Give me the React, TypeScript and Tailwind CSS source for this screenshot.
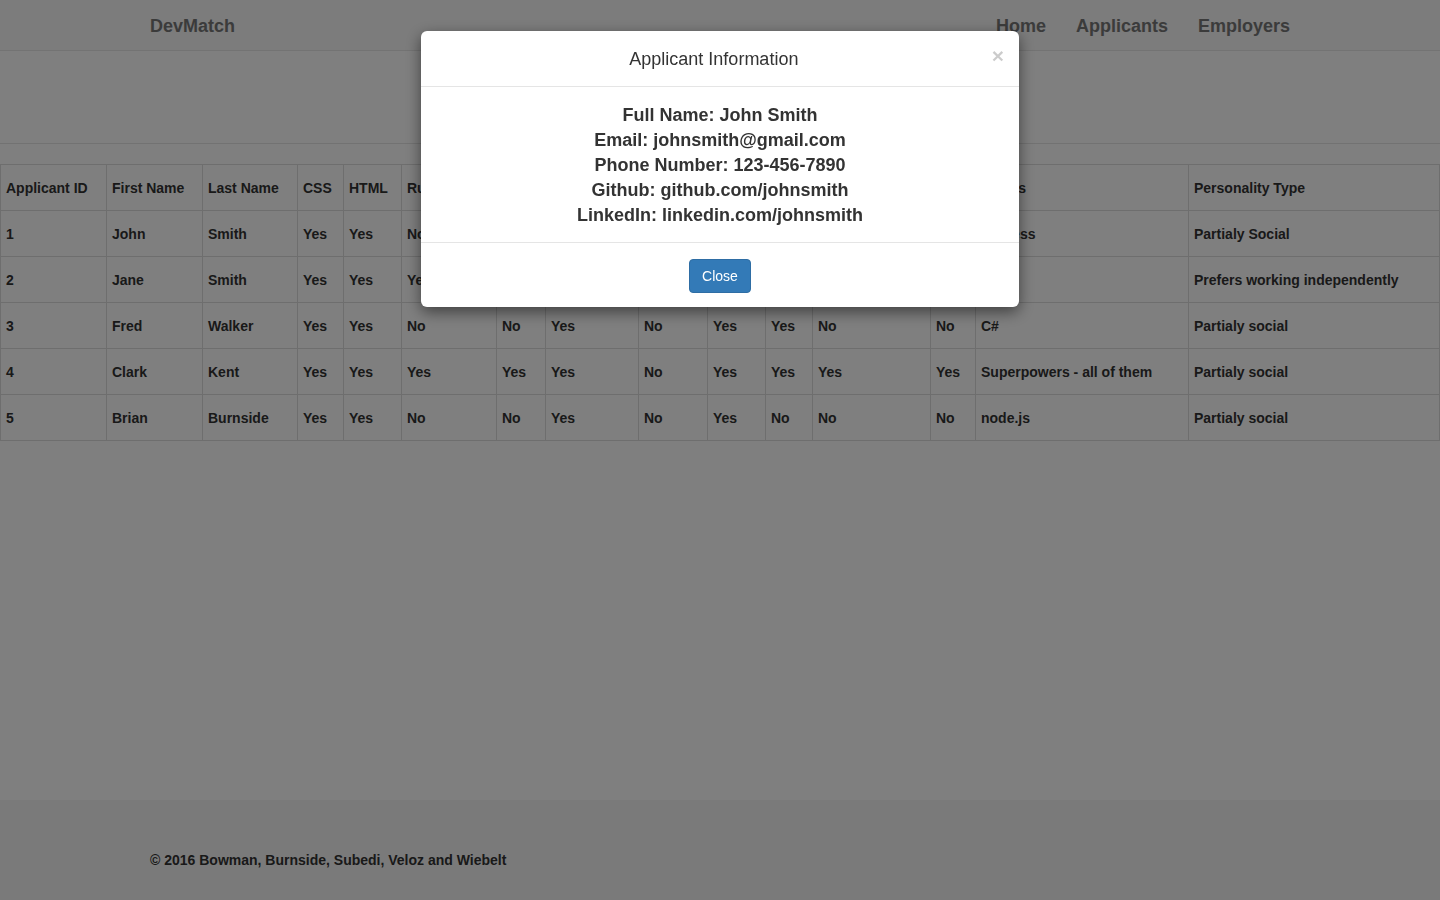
import React from 'react';

const COLUMNS: { label: string; width: string }[] = [
  { label: 'Applicant ID', width: 'w-[106px]' },
  { label: 'First Name', width: 'w-[96px]' },
  { label: 'Last Name', width: 'w-[95px]' },
  { label: 'CSS', width: 'w-[46px]' },
  { label: 'HTML', width: 'w-[58px]' },
  { label: 'Ruby', width: 'w-[95px]' },
  { label: 'PHP', width: 'w-[49px]' },
  { label: 'JS', width: 'w-[93px]' },
  { label: 'SQL', width: 'w-[69px]' },
  { label: 'Java', width: 'w-[58px]' },
  { label: 'C++', width: 'w-[47px]' },
  { label: 'Angular', width: 'w-[118px]' },
  { label: 'iOS', width: 'w-[45px]' },
  { label: 'Others', width: 'w-[213px]' },
  { label: 'Personality Type', width: 'w-[251px]' }
];

const ROWS: string[][] = [
  ['1', 'John', 'Smith', 'Yes', 'Yes', 'No', 'Yes', 'Yes', 'No', 'Yes', 'No', 'Yes', 'No', 'Express', 'Partialy Social'],
  ['2', 'Jane', 'Smith', 'Yes', 'Yes', 'Yes', 'No', 'Yes', 'Yes', 'No', 'Yes', 'No', 'No', '', 'Prefers working independently'],
  ['3', 'Fred', 'Walker', 'Yes', 'Yes', 'No', 'No', 'Yes', 'No', 'Yes', 'Yes', 'No', 'No', 'C#', 'Partialy social'],
  ['4', 'Clark', 'Kent', 'Yes', 'Yes', 'Yes', 'Yes', 'Yes', 'No', 'Yes', 'Yes', 'Yes', 'Yes', 'Superpowers - all of them', 'Partialy social'],
  ['5', 'Brian', 'Burnside', 'Yes', 'Yes', 'No', 'No', 'Yes', 'No', 'Yes', 'No', 'No', 'No', 'node.js', 'Partialy social']
];

const INFO = [
  'Full Name: John Smith',
  'Email: johnsmith@gmail.com',
  'Phone Number: 123-456-7890',
  'Github: github.com/johnsmith',
  'LinkedIn: linkedin.com/johnsmith'
];

function Navbar(): JSX.Element {
  return (
    <div className="h-[51px] bg-[#f8f8f8] border-b border-[#e7e7e7]">
      <div className="w-[1140px] mx-auto h-[50px] pt-[2px] flex items-center justify-between text-[18px] font-bold text-[#777]">
        <span>DevMatch</span>
        <div className="flex gap-[30px]">
          <span>Home</span>
          <span>Applicants</span>
          <span>Employers</span>
        </div>
      </div>
    </div>
  );
}

function ApplicantTable(): JSX.Element {
  return (
    <table className="table-fixed border-collapse w-[1440px] text-[14px] font-bold text-[#333]">
      <colgroup>
        {COLUMNS.map((c) => (
          <col key={c.label} className={c.width} />
        ))}
      </colgroup>
      <thead>
        <tr className="h-[46px]">
          {COLUMNS.map((c) => (
            <th key={c.label} className="border border-[#ddd] px-[5px] pt-[1px] text-left font-bold whitespace-nowrap">
              {c.label}
            </th>
          ))}
        </tr>
      </thead>
      <tbody>
        {ROWS.map((row) => (
          <tr key={row[0]} className="h-[46px]">
            {row.map((cell, i) => (
              <td key={i} className="border border-[#ddd] px-[5px] pt-[1px] whitespace-nowrap">
                {cell}
              </td>
            ))}
          </tr>
        ))}
      </tbody>
    </table>
  );
}

function ApplicantModal(): JSX.Element {
  return (
    <div className="fixed inset-0 bg-black/50">
      <div className="w-[598px] mx-auto mt-[31px] bg-white rounded-[6px] shadow-[0_5px_15px_rgba(0,0,0,0.5)] text-[#333]">
        <div className="flex items-center px-[15px] pt-[16px] pb-[14px] border-b border-[#e5e5e5]">
          <h4 className="flex-1 text-center text-[18px] leading-[25px]">Applicant Information</h4>
          <span className="text-[21px] font-bold leading-none text-black opacity-20 -mt-[8px]">×</span>
        </div>
        <div className="px-[15px] pt-[16px] pb-[14px] text-center text-[18px] font-bold leading-[25px]">
          {INFO.map((line) => (
            <div key={line}>{line}</div>
          ))}
        </div>
        <div className="px-[15px] pt-[16px] pb-[14px] border-t border-[#e5e5e5] flex justify-center">
          <button className="h-[34px] px-[12px] text-[14px] text-white bg-[#337ab7] border border-[#2e6da4] rounded-[4px]">
            Close
          </button>
        </div>
      </div>
    </div>
  );
}

export default function App(): JSX.Element {
  return (
    <div className="relative min-h-[900px] flex flex-col bg-white font-['Liberation_Sans',Arial,sans-serif]">
      <Navbar />
      <div className="h-[93px] border-b border-[#e5e5e5]" />
      <div className="pt-[20px]">
        <ApplicantTable />
      </div>
      <footer className="mt-auto h-[100px] bg-[#f5f5f5]">
        <div className="w-[1140px] mx-auto pt-[50px] text-[14px] font-bold text-[#333]">
          © 2016 Bowman, Burnside, Subedi, Veloz and Wiebelt
        </div>
      </footer>
      <ApplicantModal />
    </div>
  );
}
